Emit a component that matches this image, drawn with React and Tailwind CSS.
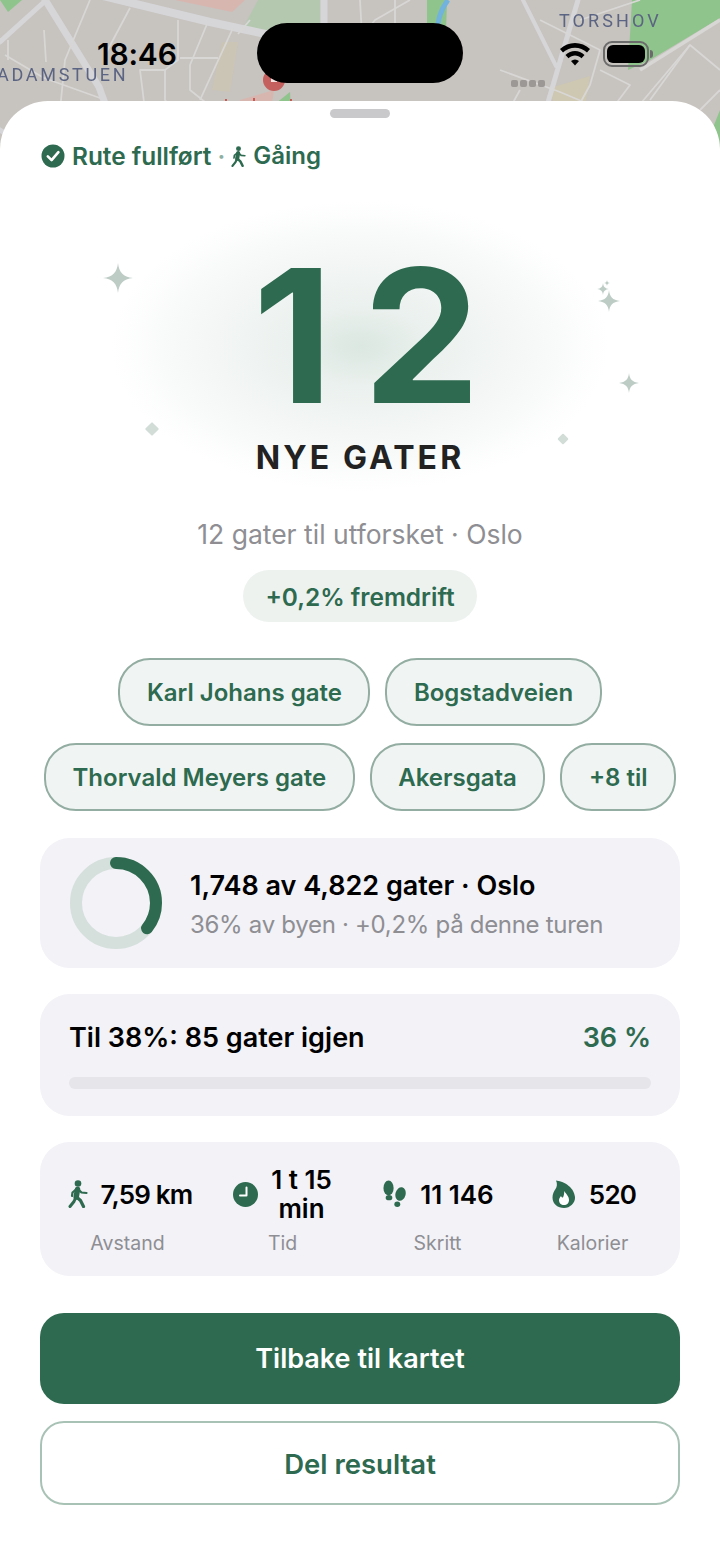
const GREEN = '#2d6a4f'

function MapBackdrop() {
  return (
    <svg width="720" height="160" viewBox="0 0 720 160" className="block blur-[0.5px]">
      <rect width="720" height="160" fill="#c7c3bf" />
      {/* parks, water */}
      <path d="M175 0 L245 0 L232 12 Z" fill="#d8b6b0" />
      <path d="M243 28 L258 0 L320 0 L320 36 Z" fill="#b4c8b0" />
      <path d="M0 0 L22 0 L8 12 Z" fill="#8fc48c" />
      <path d="M427 0 L447 0 L446 32 L427 34 Z" fill="#8fc48c" />
      <path d="M632 0 L720 0 L720 18 L650 60 L628 70 Z" fill="#8fc48c" />
      <path d="M700 160 L720 110 L720 160 Z" fill="#8fc48c" />
      <path d="M240 100 L274 90 L268 130 L225 130 Z" fill="#d8b6b0" />
      <path d="M265 112 L290 92 L292 130 L262 130 Z" fill="#8fc48c" />
      <path d="M385 130 L392 110 L382 105 L372 130 Z" fill="#8fc48c" />
      <path d="M222 42 L238 42 L230 92 L212 90 Z" fill="#d2c9a8" opacity="0.4" />
      <path d="M550 88 L590 76 L585 106 L555 110 Z" fill="#d2c9a8" opacity="0.6" />
      <path d="M448 0 C440 10 438 20 437 34" stroke="#71b3dd" strokeWidth="5" fill="none" />
      <path d="M448 115 L455 140" stroke="#71b3dd" strokeWidth="5" fill="none" />
      {/* big roads */}
      <g stroke="#d6d6d9" fill="none" strokeLinecap="round">
        <path d="M103 -4 L210 22 L275 36 L330 38" strokeWidth="8" />
        <path d="M44 -2 L99 87 L122 150" strokeWidth="7" />
        <path d="M0 42 L44 2" strokeWidth="5" />
        <path d="M324 0 L324 42" strokeWidth="7" />
        <path d="M319 115 L314 150" strokeWidth="6" />
        <path d="M523 0 L556 66" strokeWidth="4" />
        <path d="M578 0 L537 140" strokeWidth="5" />
        <path d="M448 115 L490 140" strokeWidth="5" />
        <path d="M0 130 L30 150" strokeWidth="5" />
      </g>
      {/* small streets */}
      <g stroke="#d8d7d5" fill="none" strokeWidth="1.8" strokeLinejoin="round">
        <path d="M5 55 L44 78 L100 98" />
        <path d="M8 40 L8 60" />
        <path d="M44 30 L46 62" />
        <path d="M90 0 L65 60 L60 110" />
        <path d="M130 8 L105 55" />
        <path d="M178 20 L178 60 L165 70 L140 70 L145 110" />
        <path d="M207 24 L190 65 L190 90 L205 102" />
        <path d="M233 28 L200 100" />
        <path d="M165 70 L165 100 L180 120" />
        <path d="M180 58 L218 58" />
        <path d="M250 20 L238 34" />
        <path d="M360 0 L362 36 L395 42" />
        <path d="M410 0 L375 20 L362 36" />
        <path d="M395 0 L395 42 L430 30" />
        <path d="M345 130 L360 122 L410 122 L425 130" />
        <path d="M500 70 L560 92 L650 130" />
        <path d="M540 20 L600 50 L590 85 L560 140" />
        <path d="M520 90 L495 135" />
        <path d="M495 105 L560 125" />
        <path d="M600 70 L630 85 L600 125" />
        <path d="M640 70 L720 20" strokeWidth="3.5" />
        <path d="M650 100 L690 45 L720 70" />
        <path d="M625 122 L690 45" />
        <path d="M700 110 L720 90" />
        <path d="M580 20 L640 0" />
      </g>
      <circle cx="274" cy="80" r="11" fill="#c4605e" />
      <rect x="271" y="76" width="6" height="6" fill="#f3e4e2" />
      <path d="M226 99 L226 104 M254 98 L254 104 M291 99 L291 104" stroke="#c9433f" strokeWidth="1.6" />
      <g fontFamily="Roboto, sans-serif" fontSize="18" fill="#5b6482">
        <text x="-3" y="81" letterSpacing="2.7">ADAMSTUEN</text>
        <text x="559" y="27" letterSpacing="3.1">TORSHOV</text>
      </g>
      <g fill="#9b9895">
        <rect x="511" y="80" width="7" height="7" rx="2" />
        <rect x="520" y="80" width="7" height="7" rx="2" />
        <rect x="529" y="80" width="7" height="7" rx="2" />
        <rect x="538" y="80" width="7" height="7" rx="2" />
      </g>
    </svg>
  )
}

function StatusBar() {
  return (
    <div className="absolute top-0 left-0 w-full h-[100px]">
      <span className="absolute left-[97px] top-[36px] text-[30px] leading-[36px] font-semibold text-black tracking-[-0.2px]">18:46</span>
      <div className="absolute left-[257px] top-[23px] w-[206px] h-[60px] rounded-[30px] bg-black" />
      {/* wifi */}
      <svg className="absolute left-[559px] top-[40px]" width="32" height="28" viewBox="0 0 32 28">
        <path d="M1 9 C9 1 23 1 31 9 L28 12.5 C21.5 6 10.5 6 4 12.5 Z" fill="#000" />
        <path d="M6.5 15 C12 9.5 20 9.5 25.5 15 L22.5 18.3 C18.5 14.5 13.5 14.5 9.5 18.3 Z" fill="#000" />
        <path d="M12 21 C14.5 19 17.5 19 20 21 L16 25.5 Z" fill="#000" />
      </svg>
      {/* battery */}
      <div className="absolute left-[603px] top-[41px] w-[46px] h-[26px] rounded-[9px] border-2 border-[#6b6b6b] p-[2px]">
        <div className="w-full h-full rounded-[6px] bg-black" />
      </div>
      <div className="absolute left-[650px] top-[50px] w-[3px] h-[8px] rounded-r-sm bg-[#6b6b6b]" />
    </div>
  )
}

function Sparkle({ className, size }) {
  return (
    <svg className={className} width={size} height={size} viewBox="0 0 24 24">
      <path d="M12 0 C12.8 7.5 16 11 24 12 C16 13 12.8 16.5 12 24 C11.2 16.5 8 13 0 12 C8 11 11.2 7.5 12 0 Z" fill="#bdcdc6" />
    </svg>
  )
}

function Walker({ width, height }) {
  return (
    <svg width={width} height={height} viewBox="0 0 20 28" fill="none" stroke={GREEN} strokeLinecap="round" strokeLinejoin="round">
      <circle cx="10" cy="3.5" r="3.3" fill={GREEN} stroke="none" />
      <path d="M9.5 9.5 L8.2 17" strokeWidth="5.5" />
      <path d="M8 17 L6 21.5 L2 26.5" strokeWidth="3" />
      <path d="M8.5 17 L12.5 20.5 L15.5 26.5" strokeWidth="3.2" />
      <path d="M8.5 9 L4.5 12.5 L4 16" strokeWidth="2.2" />
      <path d="M10 9 L13.5 12.5 L18.5 13" strokeWidth="2.2" />
    </svg>
  )
}

function Hero() {
  return (
    <div className="relative flex flex-col items-center">
      {/* glow behind the number */}
      <div className="absolute left-[72px] top-[30px] w-[496px] h-[290px] bg-[radial-gradient(ellipse_closest-side_at_center,#dbe7e1_0%,#ebf1ee_28%,#f3f6f5_58%,#f9fbfa_80%,#ffffff_100%)]" />
      <Sparkle className="absolute left-[63px] top-[92px]" size={30} />
      <Sparkle className="absolute left-[558px] top-[119px]" size={22} />
      <Sparkle className="absolute left-[557px] top-[112px]" size={12} />
      <Sparkle className="absolute left-[564px] top-[109px]" size={6} />
      <Sparkle className="absolute left-[579px] top-[202px]" size={20} />
      <div className="absolute left-[107px] top-[253px] w-[10px] h-[10px] rotate-45 rounded-[1px] bg-[#d3ddd8]" />
      <div className="absolute left-[519px] top-[264px] w-[8px] h-[8px] rotate-45 rounded-[1px] bg-[#d3ddd8]" />

      <div className="relative mt-[72px] ml-[13px] text-[186px] leading-[186px] font-bold text-[#2d6a4f]">
        <span className="mr-[30px]">1</span>2
      </div>
      <div className="relative mt-[9px] text-[32px] leading-[40px] font-bold tracking-[3.1px] text-[#222222]">NYE GATER</div>
      <div className="relative mt-[38px] text-[26.5px] leading-[36px] text-[#8e8e93]">12 gater til utforsket · Oslo</div>
      <div className="relative mt-[18px] h-[52px] px-[22px] pt-[2px] flex items-center rounded-full bg-[#edf2ef] text-[24.4px] font-semibold text-[#2d6a4f]">+0,2% fremdrift</div>
    </div>
  )
}

const streets = ['Karl Johans gate', 'Bogstadveien', 'Thorvald Meyers gate', 'Akersgata', '+8 til']

function Stat({ icon, value, label, narrow, tight, rowClass = '' }) {
  return (
    <div className="flex flex-col items-center">
      <div className={`h-[56px] flex items-center gap-[13px] ${rowClass}`}>
        {icon}
        <span className={`text-[26px] leading-[29px] font-semibold text-black text-center ${narrow ? 'w-[62px]' : ''} ${tight ? 'tracking-[-0.8px]' : ''}`}>{value}</span>
      </div>
      <div className="mt-[8px] text-[19.5px] leading-[26px] text-[#8e8e93]">{label}</div>
    </div>
  )
}

export default function App() {
  return (
    <div className="relative w-[720px] h-[1564px] overflow-hidden bg-white font-['Inter',sans-serif]">
      <MapBackdrop />
      <StatusBar />

      <div className="relative -mt-[59px] rounded-t-[48px] bg-white h-[1463px] px-[40px]">
        <div className="pt-[8px]">
          <div className="mx-auto w-[60px] h-[9px] rounded-full bg-[#c9c9cc]" />
        </div>

        {/* route done */}
        <div className="mt-[22px] h-[32px] flex items-center text-[24.4px] font-semibold text-[#2d6a4f]">
          <svg width="24" height="24" viewBox="0 0 24 24" className="ml-[1px] mr-[7px]">
            <circle cx="12" cy="12" r="11.5" fill={GREEN} />
            <path d="M6.8 12.4 L10.6 16.2 L17.4 8.2" stroke="#fff" strokeWidth="2.6" fill="none" strokeLinecap="round" strokeLinejoin="round" />
          </svg>
          <span>Rute fullført</span>
          <span className="mx-[6px] text-[#8fb0a1]">·</span>
          <span className="mr-[7px]"><Walker width={15} height={21} /></span>
          <span className="text-[24px]">Gåing</span>
        </div>

        <div className="-mt-[1px]">
          <Hero />
        </div>

        <div className="mt-[36px] -mx-[4px] flex flex-wrap justify-center gap-x-[15px] gap-y-[17px]">
          {streets.map(s => (
            <div key={s} className="h-[68px] px-[26.5px] pt-[2px] flex items-center rounded-[32px] border-2 border-[#93ada2] bg-[#f0f5f3] text-[24px] font-semibold text-[#2d6a4f]">{s}</div>
          ))}
        </div>

        {/* city progress */}
        <div className="mt-[27px] h-[130px] rounded-[30px] bg-[#f2f2f7] flex items-center pl-[30px]">
          <svg width="92" height="92" viewBox="0 0 92 92">
            <circle cx="46" cy="46" r="40" fill="none" stroke="#d5dfdb" strokeWidth="12" />
            <circle cx="46" cy="46" r="40" fill="none" stroke={GREEN} strokeWidth="12" strokeLinecap="round" strokeDasharray="90 251.3" transform="rotate(-90 46 46)" />
          </svg>
          <div className="ml-[28px] pt-[4px]">
            <div className="text-[27px] leading-[38px] font-semibold text-black">1,748 av 4,822 gater · Oslo</div>
            <div className="mt-[2px] text-[24px] leading-[36px] tracking-[-0.3px] text-[#8e8e93]">36% av byen · +0,2% på denne turen</div>
          </div>
        </div>

        {/* next goal */}
        <div className="mt-[26px] h-[122px] rounded-[30px] bg-[#f2f2f7] px-[29px] pt-[26px]">
          <div className="flex justify-between items-center h-[36px]">
            <span className="text-[27px] font-semibold text-black">Til 38%: 85 gater igjen</span>
            <span className="text-[27px] font-semibold text-[#2d6a4f]">36 %</span>
          </div>
          <div className="mt-[21px] h-[12px] rounded-full bg-[#e5e5ea]" />
        </div>

        {/* trip stats */}
        <div className="mt-[26px] h-[134px] rounded-[30px] bg-[#f2f2f7] px-[10px] pt-[24px] grid grid-cols-4">
          <Stat
            tight
            rowClass="ml-[5px]"
            value="7,59 km"
            label="Avstand"
            icon={<Walker width={20} height={28} />}
          />
          <Stat
            narrow
            value="1 t 15 min"
            label="Tid"
            icon={
              <svg width="25" height="25" viewBox="0 0 25 25">
                <circle cx="12.5" cy="12.5" r="12.5" fill={GREEN} />
                <path d="M7 13.5 L13.5 13.5 L13.5 5.5" stroke="#fff" strokeWidth="2" fill="none" strokeLinecap="round" strokeLinejoin="round" />
              </svg>
            }
          />
          <Stat
            rowClass="ml-[2px] gap-[11px]"
            value="11 146"
            label="Skritt"
            icon={
              <svg width="24" height="30" viewBox="0 0 26 30" fill={GREEN}>
                <ellipse cx="6" cy="8.5" rx="5.5" ry="8" />
                <ellipse cx="6.5" cy="19" rx="3.6" ry="2.8" />
                <ellipse cx="19" cy="15" rx="5.5" ry="7.5" transform="rotate(14 19 15)" />
                <ellipse cx="15.5" cy="26" rx="3.2" ry="3" />
              </svg>
            }
          />
          <Stat
            tight
            rowClass="ml-[3px]"
            value="520"
            label="Kalorier"
            icon={
              <svg width="24" height="29" viewBox="0 0 24 29">
                <path d="M4 0.5 C10 1 22 6 23 17 C23.5 23 18 28 12 28 C6 28 0.5 24 0.5 17.5 C0.5 14 2 11 3.5 9 C5 7 5.5 3.5 4 0.5 Z" fill={GREEN} />
                <path d="M12 11 C14 14 17 16 17 20 C17 23 15 25 12 25 C9 25 7 23 7 20 C7 18.5 8 17.5 9 16 C9.5 17 10 17.5 11 17.5 C12 15 12.5 13 12 11 Z" fill="#fff" />
              </svg>
            }
          />
        </div>

        <button className="mt-[37px] w-full h-[91px] pt-[2px] rounded-[24px] bg-[#2d6a4f] text-white text-[27px] font-semibold">Tilbake til kartet</button>
        <button className="mt-[17px] w-full h-[84px] pt-[3px] rounded-[24px] border-2 border-[#a9c2b6] bg-white text-[#2d6a4f] text-[27.5px] font-semibold">Del resultat</button>
      </div>
    </div>
  )
}
